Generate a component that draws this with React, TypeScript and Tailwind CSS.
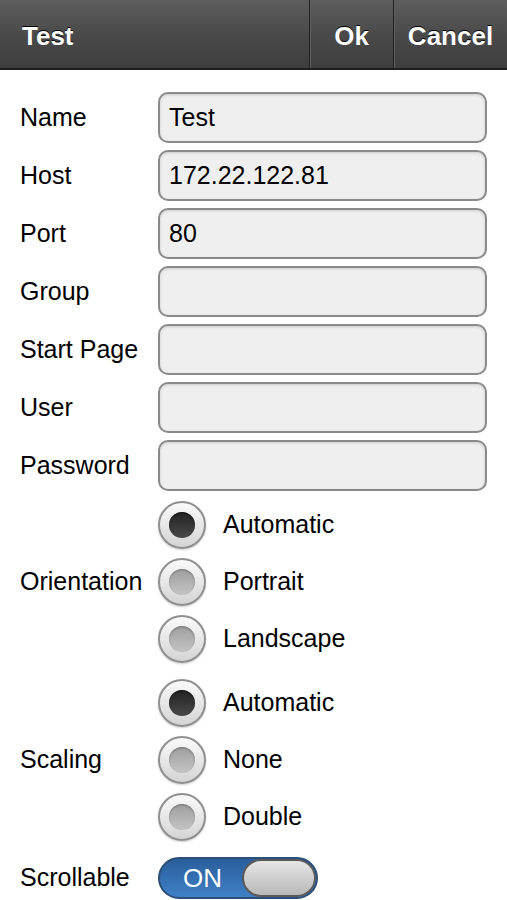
import type { ReactNode } from "react";

const font = { fontFamily: '"Liberation Sans", Arial, Helvetica, sans-serif' };

function Header() {
  return (
    <div className="flex h-[70px] border-b-2 border-[#1e1e1e] bg-gradient-to-b from-[#5e5e5e] via-[#4a4a4a] to-[#3e3e3e] text-[26px] font-bold text-white [text-shadow:0_-1px_0_#000]">
      <div className="flex flex-1 items-center pl-[22px] pt-[4px]">Test</div>
      <div className="flex w-[84px] items-center justify-center border-l border-[#222] pt-[4px] shadow-[inset_1px_0_0_#5e5e5e]">
        Ok
      </div>
      <div className="flex w-[114px] items-center justify-center border-l border-[#222] pt-[4px] shadow-[inset_1px_0_0_#5e5e5e]">
        Cancel
      </div>
    </div>
  );
}

function Label({ children }: { children: ReactNode }) {
  return <div className="w-[138px] shrink-0 text-[25px] text-black">{children}</div>;
}

function TextRow({ label, value }: { label: string; value?: string }) {
  return (
    <div className="flex h-[51px] items-center">
      <Label>{label}</Label>
      <div className="flex h-full w-[329px] items-center rounded-[10px] border-2 border-[#8a8a8a] bg-[#efefef] pl-[9px] text-[25px] text-black shadow-[inset_0_1px_3px_rgba(0,0,0,0.15)]">
        {value}
      </div>
    </div>
  );
}

function Radio({ checked }: { checked?: boolean }) {
  return (
    <div className="flex h-[48px] w-[48px] items-center justify-center rounded-full border-2 border-[#8f8f8f] bg-gradient-to-b from-[#fafafa] to-[#d4d4d4] shadow-[0_1px_2px_rgba(0,0,0,0.2)]">
      <div
        className={
          checked
            ? "h-[26px] w-[26px] rounded-full bg-gradient-to-b from-[#222] to-[#4a4a4a] shadow-[inset_0_1px_2px_rgba(0,0,0,0.5)]"
            : "h-[26px] w-[26px] rounded-full bg-gradient-to-b from-[#9e9e9e] to-[#c4c4c4] shadow-[inset_0_1px_2px_rgba(0,0,0,0.3)]"
        }
      />
    </div>
  );
}

function RadioGroup({ label, options }: { label: string; options: string[] }) {
  return (
    <div className="flex items-center">
      <Label>{label}</Label>
      <div className="flex flex-col">
        {options.map((o, i) => (
          <div key={o} className="flex h-[57px] items-center">
            <Radio checked={i === 0} />
            <span className="ml-[17px] text-[25px] text-black">{o}</span>
          </div>
        ))}
      </div>
    </div>
  );
}

function Toggle() {
  return (
    <div className="relative flex h-[42px] w-[160px] items-center overflow-hidden rounded-full border-2 border-[#2c4f78] bg-gradient-to-b from-[#2a5e9c] to-[#3f80c6]">
      <span className="pl-[23px] text-[26px] text-white">ON</span>
      <div className="absolute right-0 top-0 h-full w-[74px] rounded-full border-2 border-[#5a5a5a] bg-gradient-to-b from-[#e6e6e6] to-[#b8b8b8]" />
    </div>
  );
}

export default function App() {
  return (
    <div className="h-[900px] w-[507px] overflow-hidden bg-white" style={font}>
      <Header />
      <div className="flex flex-col pl-[20px] pt-[22px]">
        <div className="flex flex-col gap-[7px]">
          <TextRow label="Name" value="Test" />
          <TextRow label="Host" value="172.22.122.81" />
          <TextRow label="Port" value="80" />
          <TextRow label="Group" />
          <TextRow label="Start Page" />
          <TextRow label="User" />
          <TextRow label="Password" />
        </div>
        <div className="mt-[5px] flex flex-col gap-[7px]">
          <RadioGroup label="Orientation" options={["Automatic", "Portrait", "Landscape"]} />
          <RadioGroup label="Scaling" options={["Automatic", "None", "Double"]} />
        </div>
        <div className="mt-[12px] flex items-center">
          <Label>Scrollable</Label>
          <Toggle />
        </div>
      </div>
    </div>
  );
}
